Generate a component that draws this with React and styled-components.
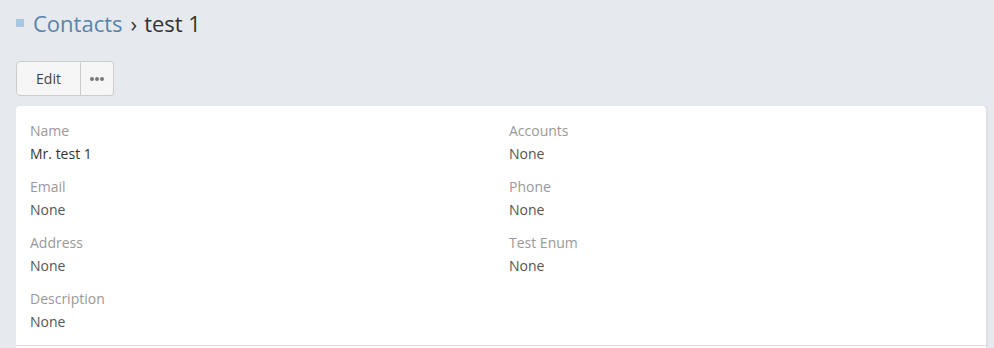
import styled, { createGlobalStyle } from "styled-components";

const GlobalStyle = createGlobalStyle`
    html, body {
        margin: 0;
        padding: 0;
        background: #e6e9ed;
        font-family: "Open Sans", "Liberation Sans", sans-serif;
        font-size: 14px;
        color: #333;
        overflow: hidden;
    }
`;

const fields = [
    [
        { label: "Name", value: "Mr. test 1", dark: true },
        { label: "Email", value: "None" },
        { label: "Address", value: "None" },
        { label: "Description", value: "None" },
    ],
    [
        { label: "Accounts", value: "None" },
        { label: "Phone", value: "None" },
        { label: "Test Enum", value: "None" },
    ],
];

const App = () => {
    return (
        <Page>
            <GlobalStyle />
            <Header>
                <Bullet />
                <Crumb href="#">Contacts</Crumb>
                <Sep>›</Sep>
                <Title>test 1</Title>
            </Header>
            <ButtonGroup>
                <Button>Edit</Button>
                <Button $narrow>
                    <Dots>
                        <span />
                        <span />
                        <span />
                    </Dots>
                </Button>
            </ButtonGroup>
            <Panel>
                <Body>
                    <Grid>
                        {fields.map((col, i) => (
                            <Column key={i}>
                                {col.map((f) => (
                                    <Field key={f.label}>
                                        <Label>{f.label}</Label>
                                        <Value $dark={f.dark}>{f.value}</Value>
                                    </Field>
                                ))}
                            </Column>
                        ))}
                    </Grid>
                </Body>
                <Footer />
            </Panel>
        </Page>
    );
};
export default App;

const Page = styled.div`
    padding: 0 8px 0 16px;
    height: 348px;
    box-sizing: border-box;
`;

const Header = styled.div`
    display: flex;
    align-items: center;
    height: 46px;
    font-size: 22px;
    line-height: 30px;
`;

const Bullet = styled.span`
    width: 8px;
    height: 8px;
    background: #a9c7e3;
    margin-right: 9px;
    margin-top: -1px;
`;

const Crumb = styled.a`
    color: #5884ab;
    text-decoration: none;
`;

const Sep = styled.span`
    color: #333;
    margin: 0 7px 0 8px;
`;

const Title = styled.span`
    color: #333;
`;

const ButtonGroup = styled.div`
    display: flex;
    margin-top: 15px;
`;

const Button = styled.button`
    height: 35px;
    width: ${(p) => (p.$narrow ? "33px" : "65px")};
    box-sizing: border-box;
    display: flex;
    align-items: center;
    justify-content: center;
    border: 1px solid #cccccc;
    background: #f6f6f6;
    color: #444;
    font-family: inherit;
    font-size: 14px;
    padding: 0;
    border-radius: 4px 0 0 4px;

    & + & {
        border-left: none;
        border-radius: 0 4px 4px 0;
    }
`;

const Dots = styled.span`
    display: flex;
    gap: 1px;

    span {
        width: 4px;
        height: 4px;
        border-radius: 50%;
        background: #777;
    }
`;

const Panel = styled.div`
    margin-top: 10px;
    background: #fff;
    border-radius: 4px 4px 0 0;
    box-shadow: 2px 0 0 #dde0e4;
`;

const Body = styled.div`
    padding: 15px 14px 12px;
    border-bottom: 1px solid #dddddd;
`;

const Footer = styled.div`
    height: 2px;
`;

const Grid = styled.div`
    display: grid;
    grid-template-columns: 479px 1fr;
`;

const Column = styled.div`
    display: flex;
    flex-direction: column;
    gap: 12px;
`;

const Field = styled.div`
    display: flex;
    flex-direction: column;
    gap: 2px;
`;

const Label = styled.div`
    color: #999;
    line-height: 20px;
`;

const Value = styled.div`
    color: ${(p) => (p.$dark ? "#333" : "#555")};
    line-height: 22px;
`;
